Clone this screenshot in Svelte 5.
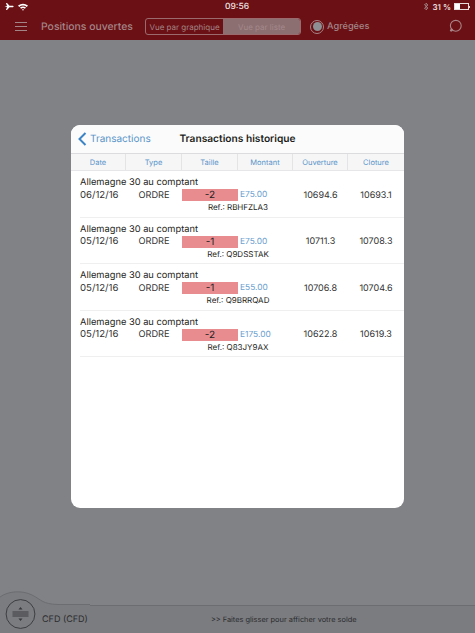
<script>
    const columns = ["Date", "Type", "Taille", "Montant", "Ouverture", "Cloture"];

    const rows = [
        { date: "06/12/16", size: "-2", amount: "E75.00", ref: "RBHFZLA3", open: "10694.6", close: "10693.1" },
        { date: "05/12/16", size: "-1", amount: "E75.00", ref: "Q9DSSTAK", open: "10711.3", close: "10708.3" },
        { date: "05/12/16", size: "-1", amount: "E55.00", ref: "Q9BRRQAD", open: "10706.8", close: "10704.6" },
        { date: "05/12/16", size: "-2", amount: "E175.00", ref: "Q83JY9AX", open: "10622.8", close: "10619.3" }
    ];
</script>

<div class="page">
    <header class="top">
        <div class="status">
            <div class="status-left">
                <svg width="11" height="9" viewBox="0 0 11 9"><path d="M0.5 4.5 L3 4 L2 1 L3 1 L5.5 3.8 L9 3.8 Q10.5 4.5 9 5.2 L5.5 5.2 L3 8 L2 8 L3 5 L0.5 4.5 Z" fill="#fff"/></svg>
                <svg width="10" height="8" viewBox="0 0 10 8"><path d="M0 2.6 Q5 -1.2 10 2.6 L8.8 3.9 Q5 1 1.2 3.9 Z M2 4.6 Q5 2.4 8 4.6 L6.9 5.7 Q5 4.3 3.1 5.7 Z M3.9 6.6 Q5 5.8 6.1 6.6 L5 7.8 Z" fill="#fff"/></svg>
            </div>
            <span class="clock">09:56</span>
            <div class="status-right">
                <svg width="6" height="9" viewBox="0 0 6 9"><path d="M1 2.2 L5 6 L3 8 V1 L5 3 L1 6.8" fill="none" stroke="#a58a8c" stroke-width="0.8"/></svg>
                <span>31 %</span>
                <span class="battery"><span class="battery-fill"></span></span>
                <span class="battery-tip"></span>
            </div>
        </div>
        <nav class="bar">
            <span class="burger"><i></i><i></i><i></i></span>
            <span class="title">Positions ouvertes</span>
            <div class="segments">
                <span class="seg">Vue par graphique</span>
                <span class="seg active">Vue par liste</span>
            </div>
            <span class="radio"><i></i></span>
            <span class="aggr">Agrégées</span>
            <svg class="search" width="18" height="18" viewBox="0 0 18 18">
                <circle cx="9.8" cy="7.8" r="5.4" fill="none" stroke="#a98386" stroke-width="1.1"/>
                <path d="M5.8 11.8 L5.2 12.4" stroke="#a98386" stroke-width="2.6" stroke-linecap="round"/>
            </svg>
        </nav>
    </header>

    <main class="backdrop">
        <section class="modal">
            <div class="modal-head">
                <div class="back">
                    <svg width="9" height="14" viewBox="0 0 9 14"><path d="M7.5 1 L1.5 7 L7.5 13" fill="none" stroke="#3d84c6" stroke-width="2"/></svg>
                    <span>Transactions</span>
                </div>
                <h2>Transactions historique</h2>
            </div>
            <div class="cols">
                {#each columns as col}
                    <span>{col}</span>
                {/each}
            </div>
            {#each rows as row}
                <div class="row">
                    <div class="name">Allemagne 30 au comptant</div>
                    <div class="cells">
                        <span class="date">{row.date}</span>
                        <span class="type">ORDRE</span>
                        <span class="size">{row.size}</span>
                        <span class="amount">{row.amount}</span>
                        <span class="num">{row.open}</span>
                        <span class="num">{row.close}</span>
                    </div>
                    <div class="ref">Ref.: {row.ref}</div>
                </div>
            {/each}
        </section>
    </main>

    <footer class="bottom">
        <svg class="bump" width="90" height="42" viewBox="0 0 90 42">
            <path d="M0 6 C8 0 22 -1 32 4 C42 9 42 13 58 13.5 H90 V42 H0 Z" fill="#7b7c7f"/>
            <path d="M0 6 C8 0 22 -1 32 4 C42 9 42 13 58 13.5 H90" fill="none" stroke="#6c6d70" stroke-width="1"/>
            <g transform="translate(5.5 8)">
                <circle cx="15" cy="15" r="14.4" fill="none" stroke="#36373a" stroke-width="0.9"/>
                <path d="M7 13 H23 M7 15 H23 M7 17 H23" stroke="#36373a" stroke-width="0.9"/>
                <path d="M15 8 L17 10.5 H13 Z M15 22 L17 19.5 H13 Z" fill="#36373a"/>
            </g>
        </svg>
        <span class="account">CFD (CFD)</span>
        <span class="hint">&gt;&gt; Faites glisser pour afficher votre solde</span>
    </footer>
</div>

<style>
    :global(body) {
        margin: 0;
        background: #818285;
    }

    .page {
        width: 475px;
        height: 633px;
        display: flex;
        flex-direction: column;
        overflow: hidden;
        font-family: Inter, "Liberation Sans", sans-serif;
        text-rendering: geometricPrecision;
        color: #1e1e20;
    }

    .top {
        background: #6b1014;
        height: 40px;
        flex: none;
    }

    .status {
        height: 13px;
        display: grid;
        grid-template-columns: 1fr auto 1fr;
        align-items: center;
        padding: 0 5px 0 4px;
        color: #e9dcdc;
        font-size: 8px;
        font-weight: 600;
    }

    .status-left {
        display: flex;
        gap: 3px;
        align-items: center;
    }

    .clock {
        font-size: 8.5px;
        color: #efe6e6;
        font-weight: 500;
    }

    .status-right {
        display: flex;
        align-items: center;
        justify-content: flex-end;
        gap: 3px;
    }

    .battery {
        width: 13px;
        height: 5px;
        border: 0.5px solid #e9dcdc;
        display: block;
        margin-right: -3px;
    }

    .battery-fill {
        display: block;
        width: 5px;
        height: 5px;
        background: #fff;
    }

    .battery-tip {
        width: 1px;
        height: 2px;
        background: #e9dcdc;
    }

    .bar {
        height: 27px;
        display: flex;
        align-items: center;
        padding-left: 15px;
        color: #a38588;
    }

    .burger {
        width: 12px;
        display: flex;
        flex-direction: column;
        gap: 3px;
    }

    .burger i {
        height: 1px;
        background: #a38588;
    }

    .title {
        margin-left: 14px;
        font-size: 10.4px;
        font-weight: 500;
        width: 92px;
        white-space: nowrap;
    }

    .segments {
        margin-left: 12px;
        width: 156px;
        height: 17px;
        display: flex;
        border: 1px solid #9a6a6d;
        border-radius: 3px;
        box-sizing: border-box;
        font-size: 8px;
        overflow: hidden;
    }

    .seg {
        flex: 1;
        display: flex;
        align-items: center;
        justify-content: center;
    }

    .seg.active {
        background: #8c6f71;
        color: #a4898b;
    }

    .radio {
        margin-left: 9px;
        width: 12px;
        height: 12px;
        border: 1px solid #a98386;
        border-radius: 50%;
        display: flex;
        align-items: center;
        justify-content: center;
    }

    .radio i {
        width: 9px;
        height: 9px;
        border-radius: 50%;
        background: #8d8f92;
    }

    .aggr {
        margin-left: 3px;
        font-size: 9.2px;
        font-weight: 500;
    }

    .search {
        margin-left: auto;
        margin-right: 11px;
    }

    .backdrop {
        flex: 1;
        padding: 85px 71px 0;
    }

    .modal {
        width: 333px;
        height: 383px;
        background: #fff;
        border-radius: 9px;
        overflow: hidden;
    }

    .modal-head {
        height: 28px;
        position: relative;
        display: flex;
        align-items: center;
        justify-content: center;
        background: #fbfbfb;
    }

    .modal-head h2 {
        margin: 0;
        font-size: 10.2px;
        font-weight: 600;
    }

    .back {
        position: absolute;
        left: 7px;
        top: 7px;
        display: flex;
        align-items: center;
        gap: 3px;
        font-size: 10px;
        color: #5a95c9;
    }

    .cols {
        height: 18px;
        display: grid;
        grid-template-columns: 55px 56px 56px 55px 55px 1fr;
        background: #f6f6f7;
        border-top: 1px solid #dcdcde;
        border-bottom: 1px solid #e6e6e8;
        box-sizing: border-box;
    }

    .cols span {
        display: flex;
        align-items: center;
        justify-content: center;
        font-size: 7.5px;
        color: #5a95c9;
        border-right: 1px solid #e4e4e6;
    }

    .cols span:last-child {
        border-right: none;
    }

    .row {
        height: 46.5px;
        margin-left: 9px;
        padding-top: 6px;
        box-sizing: border-box;
        border-bottom: 1px solid #efeff0;
    }

    .name {
        font-size: 9.3px;
        line-height: 12px;
    }

    .cells {
        display: grid;
        grid-template-columns: 46px 56px 56px 55px 55px 1fr;
        align-items: center;
        font-size: 9px;
        height: 12px;
        color: #333;
    }

    .date {
        font-size: 9.6px;
        white-space: nowrap;
    }

    .type {
        text-align: center;
        font-size: 9.2px;
    }

    .size {
        background: #e98c90;
        height: 12px;
        line-height: 12px;
        text-align: center;
        color: #222;
        font-size: 10px;
    }

    .amount {
        padding-left: 2px;
        color: #6aa0cf;
        font-size: 8.4px;
    }

    .num {
        text-align: center;
    }

    .ref {
        font-size: 8px;
        line-height: 13px;
        margin-left: 110px;
        width: 96px;
        text-align: center;
        white-space: nowrap;
    }

    .bottom {
        height: 28px;
        flex: none;
        position: relative;
        display: flex;
        align-items: center;
        background: #7b7c7f;
        border-top: 1px solid #6c6d70;
        box-sizing: border-box;
        font-size: 9px;
        color: #2b2c2f;
    }

    .bump {
        position: absolute;
        left: 0;
        bottom: 0;
    }

    .account {
        position: relative;
        margin-left: 42px;
        font-size: 9px;
    }

    .hint {
        position: relative;
        margin-left: 123px;
        font-size: 7.4px;
    }
</style>
